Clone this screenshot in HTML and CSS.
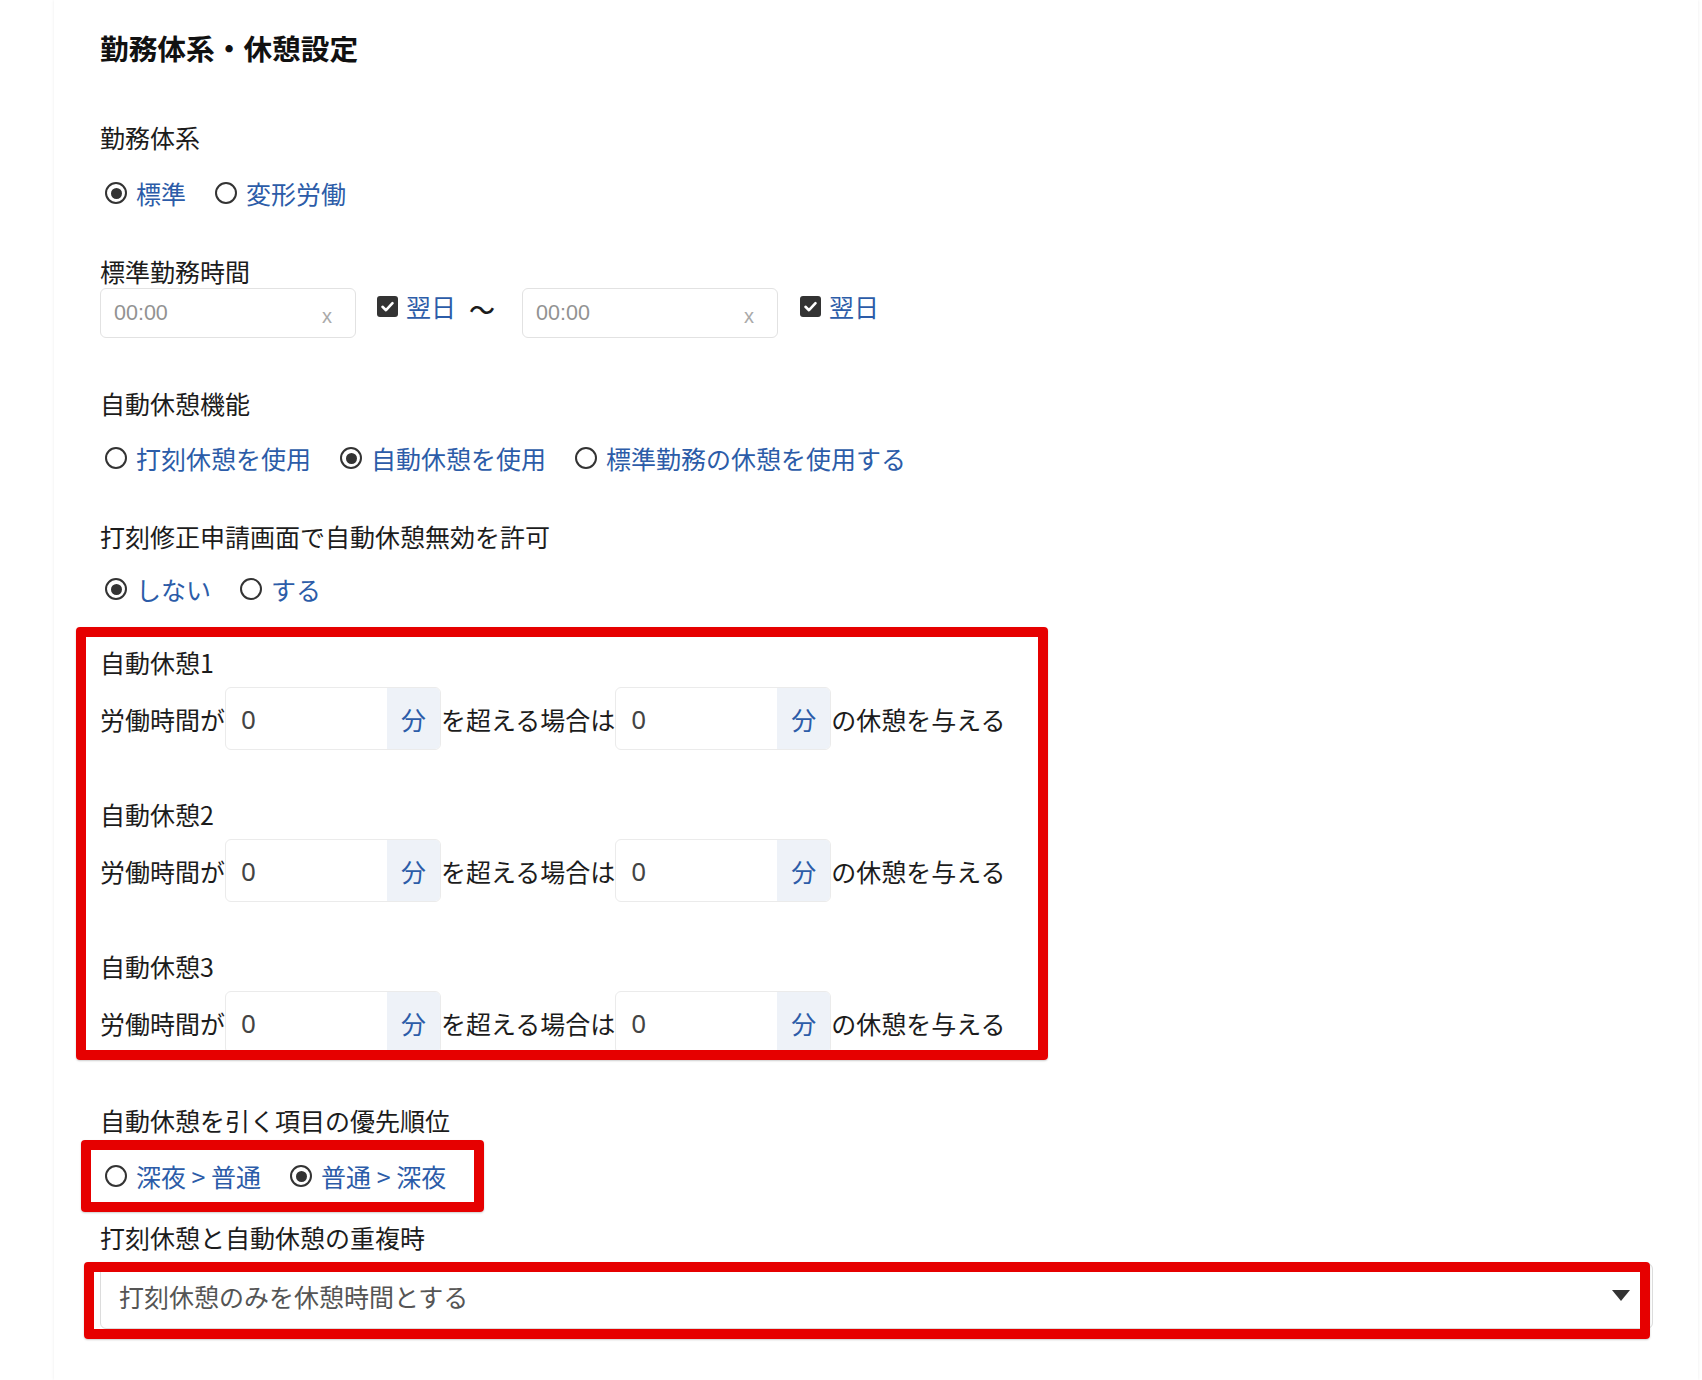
FILE: index.html
```html
<!DOCTYPE html>
<html lang="ja">
<head>
<meta charset="utf-8">
<title>勤務体系・休憩設定</title>
<link rel="stylesheet" href="styles.css">
</head>
<body>
<main class="page">
  <h1 class="page-title">勤務体系・休憩設定</h1>

  <section class="field field--system">
    <div class="field-label">勤務体系</div>
    <div class="options options--after-label">
      <label class="radio"><input type="radio" name="system" checked><span class="radio-mark"></span><span class="radio-text">標準</span></label>
      <label class="radio"><input type="radio" name="system"><span class="radio-mark"></span><span class="radio-text">変形労働</span></label>
    </div>
  </section>

  <section class="field field--hours">
    <div class="field-label">標準勤務時間</div>
    <div class="time-row">
      <div class="time-input"><input type="text" placeholder="00:00"><span class="clear">x</span></div>
      <label class="check"><input type="checkbox" checked><span class="check-mark"><svg viewBox="0 0 21 21" width="21" height="21"><path d="M5.5 10.8 L9 14.2 L15.5 7.2" fill="none" stroke="#fff" stroke-width="2.6" stroke-linecap="round" stroke-linejoin="round"/></svg></span><span class="check-text">翌日</span></label>
      <span class="tilde">〜</span>
      <div class="time-input time-input--end"><input type="text" placeholder="00:00"><span class="clear">x</span></div>
      <label class="check check--end"><input type="checkbox" checked><span class="check-mark"><svg viewBox="0 0 21 21" width="21" height="21"><path d="M5.5 10.8 L9 14.2 L15.5 7.2" fill="none" stroke="#fff" stroke-width="2.6" stroke-linecap="round" stroke-linejoin="round"/></svg></span><span class="check-text">翌日</span></label>
    </div>
  </section>

  <section class="field field--auto">
    <div class="field-label">自動休憩機能</div>
    <div class="options options--auto">
      <label class="radio"><input type="radio" name="auto"><span class="radio-mark"></span><span class="radio-text">打刻休憩を使用</span></label>
      <label class="radio"><input type="radio" name="auto" checked><span class="radio-mark"></span><span class="radio-text">自動休憩を使用</span></label>
      <label class="radio"><input type="radio" name="auto"><span class="radio-mark"></span><span class="radio-text">標準勤務の休憩を使用する</span></label>
    </div>
  </section>

  <section class="field field--allow">
    <div class="field-label">打刻修正申請画面で自動休憩無効を許可</div>
    <div class="options options--allow">
      <label class="radio"><input type="radio" name="allow" checked><span class="radio-mark"></span><span class="radio-text">しない</span></label>
      <label class="radio"><input type="radio" name="allow"><span class="radio-mark"></span><span class="radio-text">する</span></label>
    </div>
  </section>

  <section class="breaks">
    <div class="break-group">
      <div class="field-label">自動休憩1</div>
      <div class="break-row">
        <span class="break-text">労働時間が</span>
        <div class="addon-input"><input type="text" value="0"><span class="addon">分</span></div>
        <span class="break-text">を超える場合は</span>
        <div class="addon-input"><input type="text" value="0"><span class="addon">分</span></div>
        <span class="break-text">の休憩を与える</span>
      </div>
    </div>
    <div class="break-group">
      <div class="field-label">自動休憩2</div>
      <div class="break-row">
        <span class="break-text">労働時間が</span>
        <div class="addon-input"><input type="text" value="0"><span class="addon">分</span></div>
        <span class="break-text">を超える場合は</span>
        <div class="addon-input"><input type="text" value="0"><span class="addon">分</span></div>
        <span class="break-text">の休憩を与える</span>
      </div>
    </div>
    <div class="break-group">
      <div class="field-label">自動休憩3</div>
      <div class="break-row">
        <span class="break-text">労働時間が</span>
        <div class="addon-input"><input type="text" value="0"><span class="addon">分</span></div>
        <span class="break-text">を超える場合は</span>
        <div class="addon-input"><input type="text" value="0"><span class="addon">分</span></div>
        <span class="break-text">の休憩を与える</span>
      </div>
    </div>
    <div class="highlight highlight--breaks"></div>
  </section>

  <section class="field field--priority">
    <div class="field-label">自動休憩を引く項目の優先順位</div>
    <div class="options options--priority">
      <label class="radio"><input type="radio" name="priority"><span class="radio-mark"></span><span class="radio-text">深夜 &gt; 普通</span></label>
      <label class="radio"><input type="radio" name="priority" checked><span class="radio-mark"></span><span class="radio-text">普通 &gt; 深夜</span></label>
      <div class="highlight highlight--priority"></div>
    </div>
  </section>

  <section class="field field--overlap">
    <div class="field-label">打刻休憩と自動休憩の重複時</div>
    <div class="select-wrap">
      <select class="select">
        <option selected>打刻休憩のみを休憩時間とする</option>
      </select>
      <span class="caret"></span>
      <div class="highlight highlight--overlap"></div>
    </div>
  </section>
</main>
</body>
</html>
```

FILE: styles.css
```css
* {
  box-sizing: border-box;
}

html,
body {
  margin: 0;
  background: #fff;
}

body {
  font-family: "Noto Sans CJK JP", "Noto Sans", sans-serif;
  font-size: 25px;
  line-height: 36px;
  color: #1c1c1c;
}

/* white sheet with faint side edges */
.page {
  margin-left: 54px;
  width: 1644px;
  min-height: 1380px;
  padding: 28px 45px 0 46px;
  box-shadow: 0 0 3px rgba(0, 0, 0, 0.08);
}

.page-title {
  margin: 0;
  font-size: 28.7px;
  line-height: 40px;
  font-weight: 700;
  color: #111;
}

.field-label {
  font-size: 25px;
  line-height: 36px;
  color: #1c1c1c;
}

/* vertical rhythm between sections */
.field--system { margin-top: 51px; }
.field--hours { margin-top: 42px; }
.field--auto { margin-top: 47px; }
.field--allow { margin-top: 42px; }
.breaks { margin-top: 37px; }
.field--priority { margin-top: 48px; }
.field--overlap { margin-top: 25px; }

/* radio groups */
.options {
  display: flex;
  align-items: center;
  height: 36px;
  padding-left: 5px;
}

.options--after-label { margin-top: 20px; }
.options--auto { margin-top: 19px; }
.options--allow { margin-top: 17px; }
.options--priority {
  position: relative;
  margin-top: 20px;
}

.radio {
  display: flex;
  align-items: center;
  margin-right: 29px;
  cursor: pointer;
}

.radio input,
.check input {
  position: absolute;
  opacity: 0;
  width: 0;
  height: 0;
  margin: 0;
}

.radio-mark {
  position: relative;
  width: 22px;
  height: 22px;
  border: 2.5px solid #333;
  border-radius: 50%;
  margin-right: 9px;
  flex: none;
  background: #fff;
}

.radio input:checked + .radio-mark::after {
  content: "";
  position: absolute;
  left: 50%;
  top: 50%;
  width: 11px;
  height: 11px;
  margin: -5.5px 0 0 -5.5px;
  border-radius: 50%;
  background: #333;
}

.radio-text,
.check-text {
  color: #2c5ca8;
  white-space: nowrap;
}

/* working hours */
.time-row {
  display: flex;
  align-items: flex-start;
  margin-top: -1px;
}

.time-input {
  display: flex;
  align-items: center;
  width: 256px;
  height: 50px;
  padding: 0 23px 0 13px;
  border: 1px solid #e2e2e2;
  border-radius: 6px;
  background: #fff;
}

.time-input input {
  flex: 1;
  min-width: 0;
  border: 0;
  padding: 0;
  outline: none;
  background: transparent;
  font-family: "Liberation Sans", "Noto Sans", sans-serif;
  font-size: 21.5px;
  color: #444;
}

.time-input input::placeholder {
  color: #929292;
}

.clear {
  font-family: "Liberation Sans", sans-serif;
  font-size: 20px;
  line-height: 20px;
  color: #aaa;
  margin-top: 6px;
}

.time-input--end {
  margin-left: 27px;
}

.check {
  display: flex;
  align-items: center;
  height: 36px;
  margin-left: 21px;
  cursor: pointer;
}

.check--end {
  margin-left: 22px;
}

.check-mark {
  display: flex;
  width: 21px;
  height: 21px;
  border-radius: 3px;
  background: #333;
  margin-right: 8px;
  flex: none;
}

.tilde {
  margin-top: 3px;
  margin-left: 13px;
  font-size: 26px;
  line-height: 36px;
  font-weight: 500;
  color: #1c1c1c;
}

/* automatic break rules */
.breaks {
  position: relative;
}

.break-group + .break-group {
  margin-top: 46px;
}

.break-row {
  display: flex;
  align-items: center;
  height: 63px;
  margin-top: 7px;
}

.break-text {
  white-space: nowrap;
  color: #1c1c1c;
}

.addon-input {
  display: flex;
  width: 216px;
  height: 63px;
  border: 1px solid #ebebeb;
  border-radius: 6px;
  overflow: hidden;
  background: #fff;
}

.addon-input input {
  flex: 1;
  min-width: 0;
  border: 0;
  outline: none;
  padding: 0 0 0 15px;
  background: transparent;
  font-family: "Noto Sans", sans-serif;
  font-size: 26px;
  color: #444;
}

.addon {
  display: flex;
  align-items: center;
  justify-content: center;
  width: 53px;
  flex: none;
  background: #eef2f8;
  color: #2c5ca8;
  font-size: 25px;
}

/* overlap select */
.select-wrap {
  position: relative;
  margin-top: 8px;
}

.select {
  display: block;
  width: 100%;
  height: 66px;
  padding: 0 0 0 18px;
  border: 1px solid #dcdcdc;
  border-radius: 6px;
  background: #fff;
  font-family: "Noto Sans CJK JP", "Noto Sans", sans-serif;
  font-size: 25px;
  color: #555;
  -webkit-appearance: none;
  appearance: none;
  outline: none;
}

.caret {
  position: absolute;
  right: 23px;
  top: 27px;
  width: 0;
  height: 0;
  border-left: 9.5px solid transparent;
  border-right: 9.5px solid transparent;
  border-top: 11px solid #333;
  pointer-events: none;
}

/* red emphasis frames drawn over the settings */
.highlight {
  position: absolute;
  border: 10px solid #e60000;
  border-radius: 4px;
  box-shadow: 0 1px 2px rgba(0, 0, 0, 0.2);
  pointer-events: none;
}

.highlight--breaks {
  left: -24px;
  top: -17px;
  width: 972px;
  height: 433px;
}

.highlight--priority {
  left: -19px;
  top: -18px;
  width: 403px;
  height: 72px;
}

.highlight--overlap {
  left: -16px;
  top: -1px;
  width: 1566px;
  height: 77px;
}
```
